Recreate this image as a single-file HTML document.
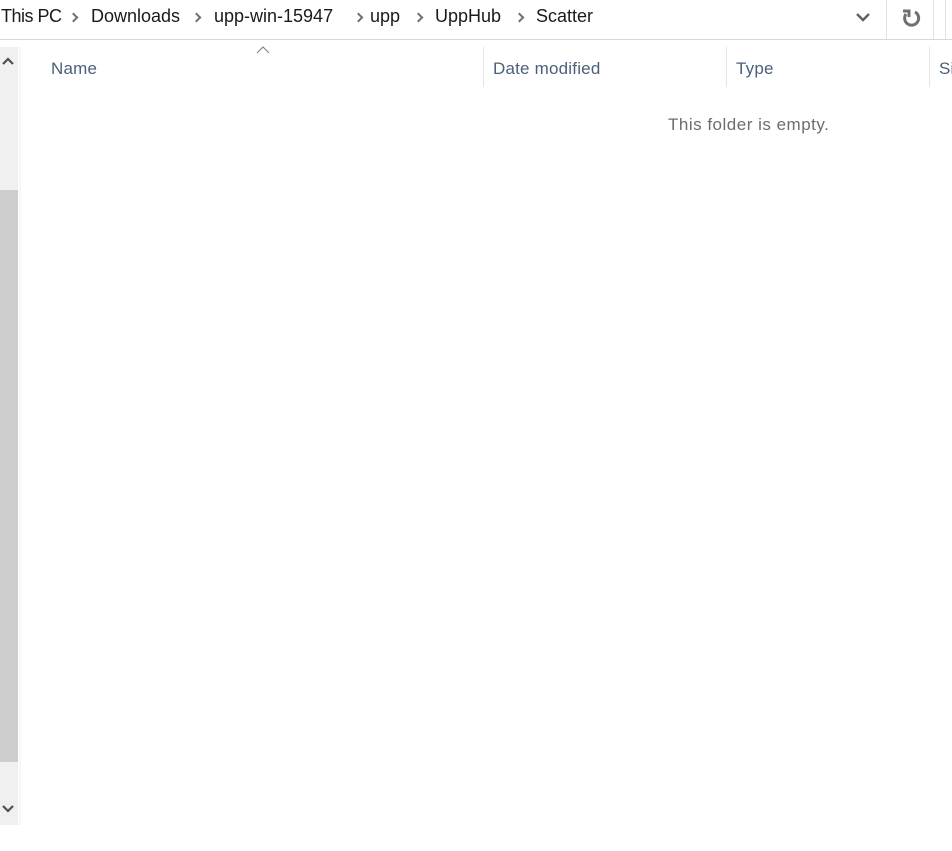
<!DOCTYPE html>
<html><head><meta charset="utf-8"><style>
body{margin:0;width:952px;height:851px;background:#fff;position:relative;overflow:hidden;font-family:"Segoe UI","Liberation Sans",sans-serif;}
.a{position:absolute}
.crumb{top:6px;font-size:18px;color:#1a1a1a;white-space:nowrap}
.sep{top:14px;width:5px;height:5px;border-right:2px solid #707070;border-top:2px solid #707070;transform:rotate(45deg)}
.hd{top:59px;font-size:17px;color:#4c607a;letter-spacing:0.2px}
.vl{top:47px;width:1px;height:40px;background:#e5e5e5}
</style></head><body>
<div class="a crumb" style="left:1px;letter-spacing:-0.5px">This PC</div>
<div class="a sep" style="left:70px"></div>
<div class="a crumb" style="left:91px">Downloads</div>
<div class="a sep" style="left:193px"></div>
<div class="a crumb" style="left:214px">upp-win-15947</div>
<div class="a sep" style="left:355px"></div>
<div class="a crumb" style="left:370px">upp</div>
<div class="a sep" style="left:415px"></div>
<div class="a crumb" style="left:435px">UppHub</div>
<div class="a sep" style="left:516px"></div>
<div class="a crumb" style="left:536px">Scatter</div>
<svg class="a" style="left:855px;top:11px" width="16" height="12"><path d="M2 3 L8 9 L14 3" stroke="#606060" stroke-width="2.4" fill="none"/></svg>
<div class="a" style="left:886px;top:0;width:1px;height:39px;background:#e3e3e3"></div>
<div class="a" style="left:933px;top:0;width:1px;height:39px;background:#e3e3e3"></div>
<div class="a" style="left:945px;top:0;width:1px;height:39px;background:#e3e3e3"></div>
<svg class="a" style="left:900px;top:6px" width="22" height="24"><path d="M6 8 A7 7 0 1 0 15 6" stroke="#707070" stroke-width="3" fill="none"/><path d="M3 5 L9 5 L9 11" stroke="#707070" stroke-width="3" fill="none"/></svg>
<div class="a" style="left:0;top:39px;width:952px;height:1px;background:#d9d9d9"></div>
<div class="a" style="left:0;top:47px;width:18px;height:778px;background:#f0f0f0"></div>
<div class="a" style="left:0;top:190px;width:18px;height:572px;background:#cdcdcd"></div>
<div class="a" style="left:19px;top:47px;width:2px;height:778px;background:#f7f7f7"></div>
<svg class="a" style="left:1px;top:56px" width="14" height="10"><path d="M2 8 L7 3 L12 8" stroke="#505050" stroke-width="2.2" fill="none"/></svg>
<svg class="a" style="left:1px;top:804px" width="14" height="10"><path d="M2 2 L7 7 L12 2" stroke="#505050" stroke-width="2.2" fill="none"/></svg>
<svg class="a" style="left:256px;top:46px" width="14" height="9"><path d="M1 7 L7 1 L13 7" stroke="#888" stroke-width="1.2" fill="none"/></svg>
<div class="a hd" style="left:51px">Name</div>
<div class="a vl" style="left:483px"></div>
<div class="a hd" style="left:493px">Date modified</div>
<div class="a vl" style="left:726px"></div>
<div class="a hd" style="left:736px">Type</div>
<div class="a vl" style="left:929px"></div>
<div class="a hd" style="left:939px">Si</div>
<div class="a" style="left:668px;top:115px;font-size:17px;color:#6d6d6d;letter-spacing:0.5px">This folder is empty.</div>
</body></html>
